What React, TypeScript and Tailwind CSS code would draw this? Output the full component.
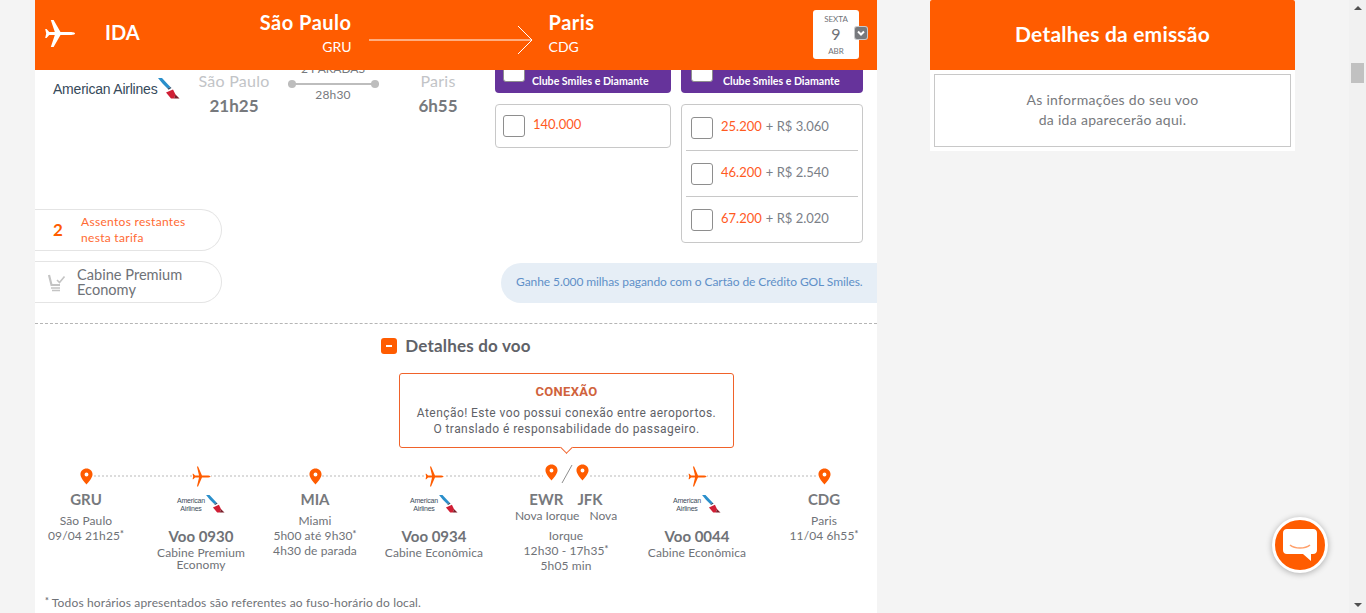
import React from 'react';

const PlaneSolid: React.FC<{ className?: string }> = ({ className }) => (
    <svg viewBox="0 0 30 27" className={className} fill="currentColor">
        <path d="M30 13.5C30 14.6 27 15 24.5 15H15.5L8.6 27H5.8L9.8 15H4.2L1.6 18H0.2L1.2 13.5L0.2 9H1.6L4.2 12H9.8L5.8 0H8.6L15.5 12H24.5C27 12 30 12.4 30 13.5Z" />
    </svg>
);

const PlaneThin: React.FC = () => (
    <svg viewBox="0 0 20 22" className="w-[19px] h-[21px] text-[#ff5c00] bg-white" fill="currentColor">
        <path d="M19.5 11C19.5 11.8 17.5 12 16 12H10.5L6.4 21.5H5.2L7.4 12H3.2L1.4 14H0.6L1.2 11L0.6 8H1.4L3.2 10H7.4L5.2 0.5H6.4L10.5 10H16C17.5 10 19.5 10.2 19.5 11Z" />
    </svg>
);

const Pin: React.FC = () => (
    <svg viewBox="0 0 14 18" className="w-[13px] h-[17px] bg-white" >
        <path fill="#ff5c00" fillRule="evenodd" d="M7 0.5C3.3 0.5 0.5 3.3 0.5 6.7C0.5 10.6 5 15.4 7 17.5C9 15.4 13.5 10.6 13.5 6.7C13.5 3.3 10.7 0.5 7 0.5ZM7 4.7A2.1 2.1 0 1 1 7 8.9A2.1 2.1 0 1 1 7 4.7Z" />
    </svg>
);

const AaSymbol: React.FC<{ className?: string }> = ({ className }) => (
    <svg viewBox="0 0 22 21" className={className}>
        <path fill="#2a8fcb" d="M0 0H4L10 6.5L12.5 9L9.5 10.5L4.5 5.5Z" />
        <path fill="#35506b" d="M9.5 10.5L12.5 9L13.5 10L10.5 11.8Z" />
        <path fill="#d01f35" d="M8 14.5L15 11.5L17.5 16.5L16 20.5H13Z" />
        <path fill="#7a1f2b" d="M17.5 16.5L21.5 20.5H16Z" />
    </svg>
);

const SmallAaLogo: React.FC = () => (
    <div className="flex items-start h-[18px] text-[#3d4c5a]">
        <div className="text-center text-[7px] leading-[7px] pt-[2px] tracking-[-0.2px] font-['Liberation_Sans',sans-serif]">
            <div>American</div>
            <div className="mt-[1px]">Airlines</div>
        </div>
        <AaSymbol className="w-[19px] h-[18px] ml-[1px]" />
    </div>
);

const Checkbox: React.FC = () => (
    <span className="block w-[22px] h-[22px] shrink-0 bg-white border border-[#8e8e8e] rounded-[3px]" />
);

const Star: React.FC = () => <sup className="text-[9px] leading-none -top-[3px] relative align-baseline font-bold">*</sup>;

const MilesRow: React.FC<{ miles: string; money: string; divided?: boolean }> = ({ miles, money, divided }) => (
    <div className={`flex items-center mx-[4px] px-[5px] ${divided ? 'h-[46px] border-t border-[#c8c8c8]' : 'h-[45px]'}`}>
        <Checkbox />
        <span className="ml-[8px] -mt-[1px] text-[13px] text-[#ff5a1f]">{miles}</span>
        <span className="ml-[4px] -mt-[1px] text-[13px] text-[#7b8087]">+ R$ {money}</span>
    </div>
);

const PurpleHead: React.FC<{ width: string; pad: string; gap: string; children?: React.ReactNode }> = ({ width, pad, gap, children }) => (
    <div className={`${width} ${pad} h-[23px] bg-[#66339b] rounded-b-[4px] flex items-start overflow-visible`}>
        <span className="block w-[22px] h-[22px] -mt-[10px] bg-white border border-[#8e8e8e] rounded-[3px] shrink-0" />
        <span className={`${gap} mt-[4px] text-[10.6px] leading-[15px] font-bold text-white whitespace-nowrap`}>{children}</span>
    </div>
);

const Stop: React.FC<{ code: string; city: string; lines: React.ReactNode[]; width: string }> = ({ code, city, lines, width }) => (
    <div className={`${width} flex flex-col items-center text-[#6f7277]`}>
        <div className="h-[30px] flex items-center justify-center"><Pin /></div>
        <div className="-mt-[1px] text-[15px] leading-[18px] font-bold text-[#77797d]">{code}</div>
        <div className="mt-[5px] text-[12px] leading-[15px] tracking-[0.1px] text-center whitespace-nowrap">
            <div>{city}</div>
            {lines.map((line, i) => <div key={i}>{line}</div>)}
        </div>
    </div>
);

const Leg: React.FC<{ flight: string; lines: string[]; width: string }> = ({ flight, lines, width }) => (
    <div className={`${width} flex flex-col items-center text-[#6f7277]`}>
        <div className="h-[30px] flex items-center justify-center"><PlaneThin /></div>
        <div className="mt-[4px]"><SmallAaLogo /></div>
        <div className="mt-[13px] text-[15px] leading-[20px] font-bold text-[#6f7277]">{flight}</div>
        <div className="mt-[1px] text-[12px] leading-[12px] tracking-[0.1px] text-center whitespace-nowrap">
            {lines.map((line, i) => <div key={i}>{line}</div>)}
        </div>
    </div>
);

const App: React.FC = () => {
    return (
        <div className="relative h-[613px] w-[1366px] overflow-hidden bg-[#f4f4f4] flex font-['Lato',sans-serif]">
            <div className="w-[1349px] flex pl-[35px]">
                {/* coluna principal */}
                <main className="w-[842px] h-[613px] bg-white flex flex-col overflow-hidden">
                    <header className="h-[70px] shrink-0 bg-[#ff5c00] text-white flex items-center relative z-10">
                        <PlaneSolid className="w-[30px] h-[27px] ml-[10px] -mt-[3px]" />
                        <span className="ml-[30px] text-[20px] font-bold -mt-[6px]">IDA</span>
                        <div className="w-[212px] text-right -mt-[4px]">
                            <div className="text-[20px] leading-[26px] font-bold tracking-[0.5px]">São Paulo</div>
                            <div className="text-[14px] leading-[20px] mt-[2px]">GRU</div>
                        </div>
                        <svg viewBox="0 0 164 30" className="w-[164px] h-[30px] ml-[17px] mt-[10px]" fill="none" stroke="currentColor">
                            <path d="M0 15H163M149 1L163 15L149 29" />
                        </svg>
                        <div className="ml-[16px] -mt-[4px]">
                            <div className="text-[20px] leading-[26px] font-bold tracking-[0.5px]">Paris</div>
                            <div className="text-[14px] leading-[20px] mt-[2px]">CDG</div>
                        </div>
                        <div className="ml-auto mr-[18px] w-[46px] h-[49px] mt-[-1px] bg-white rounded-[3px] flex flex-col items-center text-[#6f7277]">
                            <span className="text-[8px] leading-[10px] mt-[4px]">SEXTA</span>
                            <span className="text-[16px] leading-[20px]">9</span>
                            <span className="text-[8px] leading-[10px] mt-[2px]">ABR</span>
                        </div>
                        <span className="absolute left-[819px] top-[26px] w-[14px] h-[14px] bg-[#77797d] border border-white/60 rounded-[3px] flex items-center justify-center">
                            <svg viewBox="0 0 10 10" className="w-[10px] h-[10px]" fill="none" stroke="white" strokeWidth="2"><path d="M2 3.5L5 6.5L8 3.5" /></svg>
                        </span>
                    </header>

                    <section className="h-[233px] shrink-0 flex">
                        <div className="w-[460px] flex flex-col">
                            <div className="flex pl-[18px]">
                                <div className="w-[127px] flex items-start pt-[8px]">
                                    <span className="mt-[3px] text-[14px] leading-[16px] tracking-[-0.22px] text-[#36495a] font-['Liberation_Sans',sans-serif] whitespace-nowrap">American Airlines</span>
                                    <AaSymbol className="w-[22px] h-[21px] ml-[1px] shrink-0" />
                                </div>
                                <div className="w-[108px] flex flex-col items-center pt-[2px]">
                                    <span className="text-[16px] leading-[18px] tracking-[0.25px] text-[#c2c4c7]">São Paulo</span>
                                    <span className="mt-[6px] text-[17px] leading-[20px] font-bold text-[#77797d]">21h25</span>
                                </div>
                                <div className="w-[90px] flex flex-col items-center text-[#77797d]">
                                    <span className="-mt-[8px] text-[12px] leading-[14px] whitespace-nowrap">2 PARADAS</span>
                                    <div className="relative mt-[7px] w-[91px] h-[2px] shrink-0 bg-[#bdbdbd] flex items-center justify-between">
                                        <span className="w-[8px] h-[8px] rounded-full bg-[#bdbdbd]" />
                                        <span className="w-[8px] h-[8px] rounded-full bg-[#bdbdbd]" />
                                    </div>
                                    <span className="mt-[3px] text-[12px] leading-[14px] tracking-[0.2px]">28h30</span>
                                </div>
                                <div className="w-[114px] ml-[3px] flex flex-col items-center pt-[2px]">
                                    <span className="text-[16px] leading-[18px] tracking-[0.25px] text-[#c2c4c7]">Paris</span>
                                    <span className="mt-[6px] text-[17px] leading-[20px] font-bold text-[#77797d]">6h55</span>
                                </div>
                            </div>
                            <div className="mt-auto flex flex-col gap-[10px]">
                                <div className="w-[187px] h-[42px] border border-l-0 border-[#e4e4e4] rounded-r-full flex items-center">
                                    <span className="ml-[18px] w-[28px] text-[17px] font-bold text-[#ff5c00]">2</span>
                                    <span className="text-[12px] leading-[16px] tracking-[0.3px] text-[#ff6a33]">Assentos restantes<br />nesta tarifa</span>
                                </div>
                                <div className="w-[187px] h-[42px] border border-l-0 border-[#e4e4e4] rounded-r-full flex items-center">
                                    <svg viewBox="0 0 20 20" className="ml-[12px] w-[20px] h-[20px]" fill="none" stroke="#c4c4c4" strokeWidth="1.6">
                                        <path d="M2 3L4.5 13H13" strokeWidth="2.2" />
                                        <path d="M4 16H13M5 18.5H13" />
                                        <path d="M10 8L12.5 10.5L17.5 4.5" />
                                    </svg>
                                    <span className="ml-[10px] text-[14.6px] leading-[15px] text-[#6f7277]">Cabine Premium<br />Economy</span>
                                </div>
                            </div>
                        </div>
                        <div className="flex-1 flex flex-col items-end">
                            <div className="w-[382px] mr-auto flex gap-[10px]">
                                <div className="w-[176px]">
                                    <PurpleHead width="w-[176px]" pad="pl-[8px]" gap="ml-[7px]">Clube Smiles e Diamante</PurpleHead>
                                    <div className="mt-[11px] h-[44px] border border-[#c8c8c8] rounded-[4px] flex items-center px-[7px]">
                                        <Checkbox />
                                        <span className="ml-[8px] -mt-[2px] text-[13px] text-[#ff5a1f]">140.000</span>
                                    </div>
                                </div>
                                <div className="w-[182px]">
                                    <PurpleHead width="w-[182px]" pad="pl-[10px]" gap="ml-[10px]">Clube Smiles e Diamante</PurpleHead>
                                    <div className="mt-[11px] h-[139px] border border-[#c8c8c8] rounded-[4px]">
                                        <MilesRow miles="25.200" money="3.060" />
                                        <MilesRow miles="46.200" money="2.540" divided />
                                        <MilesRow miles="67.200" money="2.020" divided />
                                    </div>
                                </div>
                            </div>
                            <div className="mt-auto w-[376px] h-[40px] bg-[#e6eef6] rounded-l-full flex items-center pl-[15px] pb-[2px] text-[12px] tracking-[-0.08px] text-[#5f90c8] whitespace-nowrap">
                                Ganhe 5.000 milhas pagando com o Cartão de Crédito GOL Smiles.
                            </div>
                        </div>
                    </section>

                    <section className="mt-[20px] border-t border-dashed border-[#b5b5b5] flex-1">
                        <div className="h-[44px] mb-[5px] flex items-center justify-center gap-[8px]">
                            <span className="w-[16px] h-[16px] bg-[#ff5c00] rounded-[3px] flex items-center justify-center">
                                <span className="w-[6px] h-[2px] bg-white" />
                            </span>
                            <span className="text-[17px] tracking-[0.2px] font-bold text-[#5f6268]">Detalhes do voo</span>
                        </div>
                        <div className="relative ml-[364px] w-[335px] h-[75px] border border-[#f0622a] rounded-[3px] flex flex-col items-center font-['Roboto',sans-serif]">
                            <span className="mt-[10px] text-[13px] leading-[16px] font-bold text-[#d0623c] tracking-[0.3px]">CONEXÃO</span>
                            <span className="mt-[5px] text-[12px] leading-[16px] text-[#5f6268] tracking-[0.43px] text-center">
                                Atenção! Este voo possui conexão entre aeroportos.<br />O translado é responsabilidade do passageiro.
                            </span>
                            <span className="absolute left-[162px] -bottom-[5px] w-[9px] h-[9px] bg-white border-r border-b border-[#f0622a] rotate-45" />
                        </div>
                        <div className="relative mt-[13px] flex">
                            <div className="absolute left-[51px] right-[53px] top-[14px] border-t-2 border-dotted border-[#dcdcdc]" />
                            <div className="relative flex w-full">
                                <Stop width="w-[102px]" code="GRU" city="São Paulo" lines={[<>09/04 21h25<Star /></>]} />
                                <Leg width="w-[128px]" flight="Voo 0930" lines={['Cabine Premium', 'Economy']} />
                                <Stop width="w-[100px]" code="MIA" city="Miami" lines={[<>5h00 até 9h30<Star /></>, '4h30 de parada']} />
                                <Leg width="w-[138px]" flight="Voo 0934" lines={['Cabine Econômica']} />
                                <div className="w-[126px] flex flex-col items-center text-[#6f7277]">
                                    <div className="h-[30px] flex items-start justify-center bg-white pt-[3px] pl-[2px]">
                                        <Pin />
                                        <svg viewBox="0 0 16 20" className="w-[20px] h-[20px] mx-[-1px]" fill="none" stroke="#8e8e8e"><path d="M13 1L3 19" /></svg>
                                        <Pin />
                                    </div>
                                    <div className="-mt-[1px] text-[15px] leading-[18px] font-bold text-[#77797d] flex gap-[14px]"><span>EWR</span><span>JFK</span></div>
                                    <div className="h-[13px] overflow-hidden text-[12px] leading-[15px] whitespace-nowrap flex gap-[10px]"><span>Nova Iorque</span><span>Nova</span></div>
                                    <div className="mt-[7px] text-[12px] leading-[15px] tracking-[0.1px] text-center whitespace-nowrap">
                                        <div>Iorque</div>
                                        <div>12h30 - 17h35<Star /></div>
                                        <div>5h05 min</div>
                                    </div>
                                </div>
                                <Leg width="w-[136px]" flight="Voo 0044" lines={['Cabine Econômica']} />
                                <div className="ml-[6px]">
                                    <Stop width="w-[106px]" code="CDG" city="Paris" lines={[<>11/04 6h55<Star /></>]} />
                                </div>
                            </div>
                        </div>
                        <p className="mt-[22px] ml-[10px] text-[12px] leading-[16px] tracking-[0.15px] text-[#6f7277]"><Star /> Todos horários apresentados são referentes ao fuso-horário do local.</p>
                    </section>
                </main>

                {/* detalhes da emissão */}
                <aside className="ml-[53px] w-[365px] h-[151px] bg-white flex flex-col">
                    <div className="h-[70px] pb-[2px] bg-[#ff5c00] rounded-t-[2px] flex items-center justify-center text-[21px] tracking-[0.2px] font-bold text-white">
                        Detalhes da emissão
                    </div>
                    <div className="mt-[4px] mx-[4px] h-[73px] pb-[2px] border border-[#c8c8c8] flex items-center justify-center text-center text-[14px] leading-[20px] tracking-[0.3px] text-[#77797d]">
                        <p>As informações do seu voo<br />da ida aparecerão aqui.</p>
                    </div>
                </aside>
            </div>

            {/* barra de rolagem */}
            <div className="w-[17px] h-[613px] bg-[#f1f1f1] flex flex-col items-center justify-between py-[6px] relative">
                <span className="w-0 h-0 border-x-[4px] border-x-transparent border-b-[4px] border-b-[#505050]" />
                <span className="w-0 h-0 border-x-[4px] border-x-transparent border-t-[4px] border-t-[#505050]" />
                <span className="absolute top-[63px] left-[2px] w-[13px] h-[20px] bg-[#c1c1c1]" />
            </div>

            {/* chat */}
            <button className="absolute left-[1272px] top-[517px] w-[56px] h-[56px] rounded-full bg-[#ff5c00] border-[3px] border-white shadow-[0_1px_6px_rgba(0,0,0,0.3)] flex items-center justify-center">
                <svg viewBox="0 0 36 34" className="w-[36px] h-[34px]">
                    <path fill="white" d="M5 1H31C33.5 1 35 2.5 35 5V22C35 24.5 33.5 26 31 26H29V33L21 26H5C2.5 26 1 24.5 1 22V5C1 2.5 2.5 1 5 1Z" />
                    <path fill="none" stroke="#ffa06b" strokeWidth="1.6" d="M8 17C13 21 23 21 28 17" />
                </svg>
            </button>
        </div>
    );
};

export default App;
